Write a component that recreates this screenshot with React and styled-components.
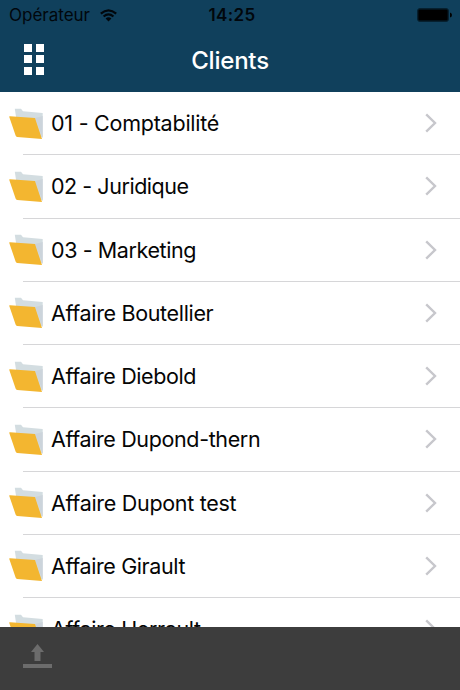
import React from 'react';
import styled, { createGlobalStyle } from 'styled-components';

const GlobalStyle = createGlobalStyle`
  * { box-sizing: border-box; }
  body { margin: 0; overflow: hidden; background: #fff; }
`;

const Screen = styled.main`
  width: 460px;
  height: 690px;
  display: flex;
  flex-direction: column;
  overflow: hidden;
  background: #fff;
  color: #050505;
  font-family: Inter, "Liberation Sans", sans-serif;
`;

const Header = styled.header`
  flex: none;
  height: 92px;
  background: #10405c;
`;

const StatusBar = styled.div`
  display: grid;
  grid-template-columns: 1fr auto 1fr;
  align-items: center;
  height: 30px;
  padding: 0 8px 0 9px;
  color: #01070c;
`;

const Carrier = styled.div`
  display: flex;
  align-items: center;
  gap: 10px;
  font-size: 17px;
  letter-spacing: 0;
  line-height: 30px;
`;

const Clock = styled.time`
  padding-left: 3px;
  font-size: 17px;
  font-weight: 600;
  letter-spacing: 0.35px;
  line-height: 30px;
`;

const BatteryIcon = styled.svg`
  justify-self: end;
`;

const NavBar = styled.div`
  display: grid;
  grid-template-columns: 1fr auto 1fr;
  align-items: center;
  height: 62px;
  padding: 0 24px;
`;

const MenuButton = styled.button`
  display: grid;
  grid-template-columns: repeat(2, 8px);
  grid-auto-rows: 8px;
  gap: 3.5px;
  justify-self: start;
  padding: 0;
  margin-bottom: 4px;
  border: 0;
  background: none;
`;

const Dot = styled.span`
  background: #fff;
`;

const Title = styled.h1`
  margin: 0;
  color: #fff;
  font-size: 24px;
  font-weight: 550;
  letter-spacing: -0.2px;
  line-height: 60px;
`;

const List = styled.ul`
  flex: 1;
  min-height: 0;
  margin: 0;
  padding: 0;
  overflow: hidden;
  list-style: none;
`;

const Row = styled.li`
  display: flex;
  align-items: center;
  height: 63.25px;
  padding-left: 9px;
`;

const FolderIcon = styled.svg`
  flex: none;
  margin-right: -20px;
`;

const RowBody = styled.div`
  flex: 1;
  display: flex;
  align-items: center;
  justify-content: space-between;
  height: 100%;
  padding: 0 22px 0 28px;
  border-bottom: 1px solid #d6d6d8;
`;

const Label = styled.span`
  font-size: 21.5px;
  letter-spacing: ${({ $spacing }) => $spacing}px;
  line-height: 28px;
  white-space: nowrap;
`;

const Toolbar = styled.footer`
  flex: none;
  display: flex;
  height: 63px;
  padding: 16px 23px;
  background: #3d3d3d;
`;

const clients = [
  { name: '01 - Comptabilité', spacing: -0.24 },
  { name: '02 - Juridique', spacing: -0.46 },
  { name: '03 - Marketing', spacing: -0.41 },
  { name: 'Affaire Boutellier', spacing: -0.34 },
  { name: 'Affaire Diebold', spacing: -0.38 },
  { name: 'Affaire Dupond-thern', spacing: -0.37 },
  { name: 'Affaire Dupont test', spacing: -0.3 },
  { name: 'Affaire Girault', spacing: -0.38 },
  { name: 'Affaire Herrault', spacing: -0.37 },
];

function Wifi() {
  return (
    <svg width="17" height="13" viewBox="0 0 17 13" fill="none" stroke="currentColor" strokeWidth="2.2">
      <path d="M.8 4.6Q8.5-2 16.2 4.6M3.6 7.5Q8.5 3.2 13.4 7.5" />
      <path d="M5.6 9.5Q8.5 7 11.4 9.5L8.5 12.6Z" fill="currentColor" stroke="none" />
    </svg>
  );
}

function Battery() {
  return (
    <BatteryIcon width="35" height="14" viewBox="0 0 35 14">
      <rect x=".5" y=".5" width="31" height="13" rx="2.5" fill="#051722" stroke="#06202f" />
      <rect x="1.5" y="1.8" width="29" height="10.4" rx="1" fill="#000" />
      <path d="M33 4.5Q35 5 35 7T33 9.5Z" fill="#000" />
    </BatteryIcon>
  );
}

function Folder() {
  return (
    <FolderIcon width="34" height="32" viewBox="0 0 34 32">
      <path d="M5.8.8 12 .7 14 3.3 33.7 5V29.5L9 22Z" fill="#d3dde1" />
      <path d="M26 10 33.7 8V30Z" fill="#ccd4db" />
      <path d="M.2 8.7Q.1 8.1 1 8.2L26 10 33 31.1 8.2 28.9Q7 28.7 6.6 27.5Z" fill="#f3b630" />
    </FolderIcon>
  );
}

function Chevron() {
  return (
    <svg width="14" height="20" viewBox="0 0 14 20" fill="none" stroke="#c7c7cc" strokeWidth="2.4">
      <path d="M2.2 1.4 11 10 2.2 18.6" />
    </svg>
  );
}

export default function App() {
  return (
    <Screen>
      <GlobalStyle />
      <Header>
        <StatusBar>
          <Carrier>Opérateur<Wifi /></Carrier>
          <Clock>14:25</Clock>
          <Battery />
        </StatusBar>
        <NavBar>
          <MenuButton aria-label="Menu">
            {[0, 1, 2, 3, 4, 5].map((i) => <Dot key={i} />)}
          </MenuButton>
          <Title>Clients</Title>
        </NavBar>
      </Header>
      <List>
        {clients.map(({ name, spacing }) => (
          <Row key={name}>
            <Folder />
            <RowBody>
              <Label $spacing={spacing}>{name}</Label>
              <Chevron />
            </RowBody>
          </Row>
        ))}
      </List>
      <Toolbar>
        <svg width="29" height="26" viewBox="0 0 29 26" fill="#6c6c6c" role="img" aria-label="Envoyer">
          <path d="M14.5 1 21 9H17.5V18H11.5V9H8ZM0 21H29V25H0Z" />
        </svg>
      </Toolbar>
    </Screen>
  );
}
